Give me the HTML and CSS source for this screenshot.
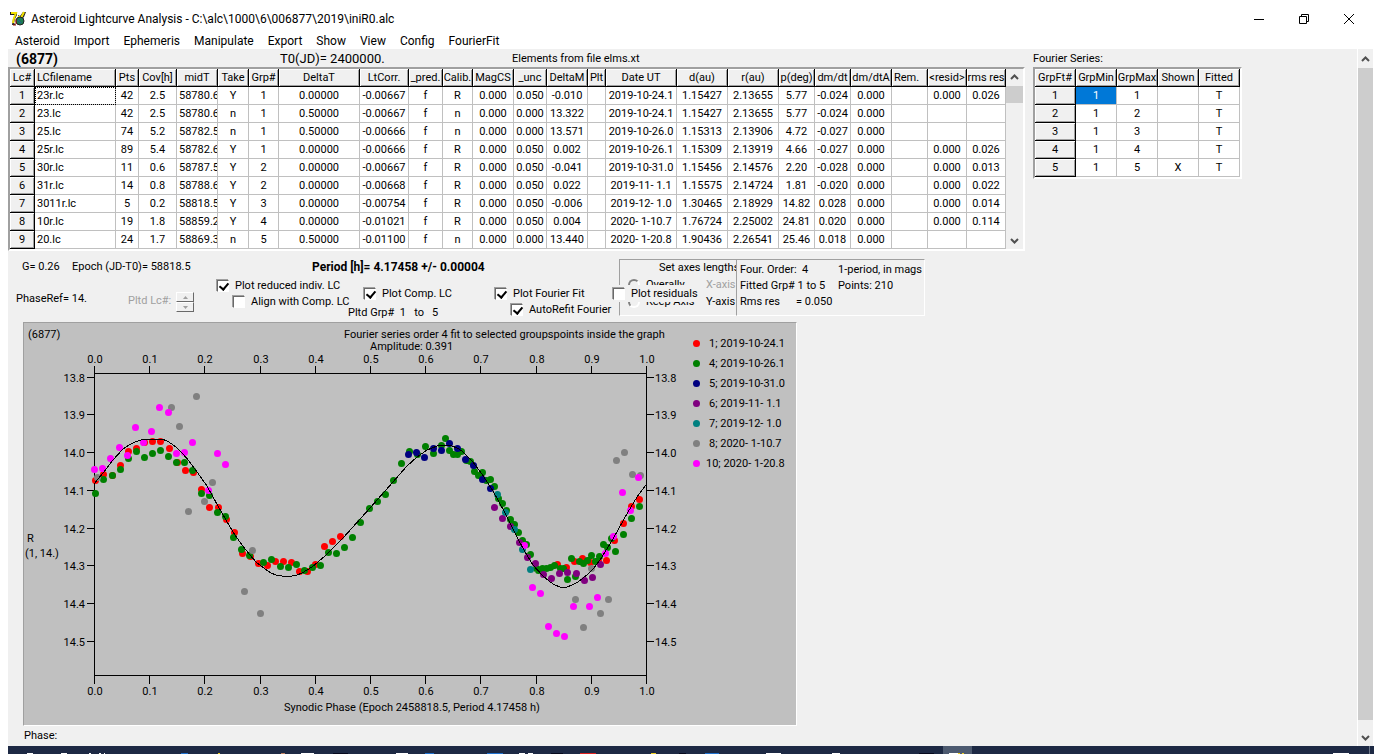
FILE: index.html
```html
<!DOCTYPE html>
<html lang="en">
<head>
<meta charset="utf-8">
<title>Asteroid Lightcurve Analysis</title>
<link rel="stylesheet" href="styles.css">
</head>
<body>
<header class="titlebar">
  <svg class="app-icon" viewBox="0 0 16 16" aria-hidden="true">
    <path d="M0 1h7v3L5 8l-1 4 2 2H2L3 8l2-4H0zM8 4l2 1 3-4h3l-2 5-3 3H8z" fill="#222"/>
    <path d="M1 2h5L4 7l-1 5M9 5v3M14 1l-3 6" fill="none" stroke="#f0e000" stroke-width="2"/>
    <circle cx="10" cy="10" r="4" fill="#1c7b54" stroke="#222"/>
    <path d="M3 14h3M6 8v5" stroke="#a01010" stroke-width="1"/>
    <path d="M8 9l3 3" stroke="#2a50a0" stroke-width="1"/>
  </svg>
  <h1 class="title">Asteroid Lightcurve Analysis - C:\alc\1000\6\006877\2019\iniR0.alc</h1>
  <div class="window-buttons">
    <button aria-label="Minimize"><svg viewBox="0 0 12 12"><path d="M1 6.500h10"/></svg></button>
    <button aria-label="Restore"><svg viewBox="0 0 12 12"><path d="M1.500 3.500h7v7h-7zM3.500 3.500v-2h7v7h-2"/></svg></button>
    <button aria-label="Close"><svg viewBox="0 0 12 12"><path d="M1 1l10 10M11 1L1 11"/></svg></button>
  </div>
</header>
<nav class="menubar">
  <button>Asteroid</button><button>Import</button><button>Ephemeris</button><button>Manipulate</button><button>Export</button><button>Show</button><button>View</button><button>Config</button><button>FourierFit</button>
</nav>
<main class="workspace">
  <div class="main-column">
    <div class="info-line">
      <strong class="object">(6877)</strong>
      <span class="epoch-zero">T0(JD)= 2400000.</span>
      <span>Elements from file elms.xt</span>
    </div>
    <div class="grid-frame">
      <table class="grid">
        <colgroup><col class="w25"><col class="w81"><col class="w23"><col class="w38"><col class="w41"><col class="w31"><col class="w30"><col class="w81"><col class="w49"><col class="w34"><col class="w30"><col class="w41"><col class="w33"><col class="w41"><col class="w18"><col class="w71"><col class="w51"><col class="w51"><col class="w36"><col class="w36"><col class="w41"><col class="w36"><col class="w39"><col class="w39"></colgroup>
        <thead><tr><th>Lc#</th><th class="left">LCfilename</th><th>Pts</th><th>Cov[h]</th><th>midT</th><th>Take</th><th>Grp#</th><th>DeltaT</th><th>LtCorr.</th><th>_pred.</th><th>Calib.</th><th>MagCS</th><th>_unc</th><th>DeltaM</th><th>Plt</th><th>Date UT</th><th>d(au)</th><th>r(au)</th><th>p(deg)</th><th>dm/dt</th><th>dm/dtA</th><th class="left">Rem.</th><th>&lt;resid&gt;</th><th>rms res</th></tr></thead>
        <tbody>
        <tr><th>1</th><td class="left focus">23r.lc</td><td>42</td><td>2.5</td><td class="left">58780.6</td><td>Y</td><td>1</td><td>0.00000</td><td>-0.00667</td><td>f</td><td>R</td><td>0.000</td><td>0.050</td><td>-0.010</td><td></td><td>2019-10-24.1</td><td>1.15427</td><td>2.13655</td><td>5.77</td><td>-0.024</td><td>0.000</td><td></td><td>0.000</td><td>0.026</td></tr>
        <tr><th>2</th><td class="left">23.lc</td><td>42</td><td>2.5</td><td class="left">58780.6</td><td>n</td><td>1</td><td>0.50000</td><td>-0.00667</td><td>f</td><td>n</td><td>0.000</td><td>0.000</td><td>13.322</td><td></td><td>2019-10-24.1</td><td>1.15427</td><td>2.13655</td><td>5.77</td><td>-0.024</td><td>0.000</td><td></td><td></td><td></td></tr>
        <tr><th>3</th><td class="left">25.lc</td><td>74</td><td>5.2</td><td class="left">58782.5</td><td>n</td><td>1</td><td>0.50000</td><td>-0.00666</td><td>f</td><td>n</td><td>0.000</td><td>0.000</td><td>13.571</td><td></td><td>2019-10-26.0</td><td>1.15313</td><td>2.13906</td><td>4.72</td><td>-0.027</td><td>0.000</td><td></td><td></td><td></td></tr>
        <tr><th>4</th><td class="left">25r.lc</td><td>89</td><td>5.4</td><td class="left">58782.6</td><td>Y</td><td>1</td><td>0.00000</td><td>-0.00666</td><td>f</td><td>R</td><td>0.000</td><td>0.050</td><td>0.002</td><td></td><td>2019-10-26.1</td><td>1.15309</td><td>2.13919</td><td>4.66</td><td>-0.027</td><td>0.000</td><td></td><td>0.000</td><td>0.026</td></tr>
        <tr><th>5</th><td class="left">30r.lc</td><td>11</td><td>0.6</td><td class="left">58787.5</td><td>Y</td><td>2</td><td>0.00000</td><td>-0.00667</td><td>f</td><td>R</td><td>0.000</td><td>0.050</td><td>-0.041</td><td></td><td>2019-10-31.0</td><td>1.15456</td><td>2.14576</td><td>2.20</td><td>-0.028</td><td>0.000</td><td></td><td>0.000</td><td>0.013</td></tr>
        <tr><th>6</th><td class="left">31r.lc</td><td>14</td><td>0.8</td><td class="left">58788.6</td><td>Y</td><td>2</td><td>0.00000</td><td>-0.00668</td><td>f</td><td>R</td><td>0.000</td><td>0.050</td><td>0.022</td><td></td><td>2019-11- 1.1</td><td>1.15575</td><td>2.14724</td><td>1.81</td><td>-0.020</td><td>0.000</td><td></td><td>0.000</td><td>0.022</td></tr>
        <tr><th>7</th><td class="left">3011r.lc</td><td>5</td><td>0.2</td><td class="left">58818.5</td><td>Y</td><td>3</td><td>0.00000</td><td>-0.00754</td><td>f</td><td>R</td><td>0.000</td><td>0.050</td><td>-0.006</td><td></td><td>2019-12- 1.0</td><td>1.30465</td><td>2.18929</td><td>14.82</td><td>0.028</td><td>0.000</td><td></td><td>0.000</td><td>0.014</td></tr>
        <tr><th>8</th><td class="left">10r.lc</td><td>19</td><td>1.8</td><td class="left">58859.2</td><td>Y</td><td>4</td><td>0.00000</td><td>-0.01021</td><td>f</td><td>R</td><td>0.000</td><td>0.050</td><td>0.004</td><td></td><td>2020- 1-10.7</td><td>1.76724</td><td>2.25002</td><td>24.81</td><td>0.020</td><td>0.000</td><td></td><td>0.000</td><td>0.114</td></tr>
        <tr><th>9</th><td class="left">20.lc</td><td>24</td><td>1.7</td><td class="left">58869.3</td><td>n</td><td>5</td><td>0.50000</td><td>-0.01100</td><td>f</td><td>n</td><td>0.000</td><td>0.000</td><td>13.440</td><td></td><td>2020- 1-20.8</td><td>1.90436</td><td>2.26541</td><td>25.46</td><td>0.018</td><td>0.000</td><td></td><td></td><td></td></tr>
        </tbody>
      </table>
      <div class="scrollbar">
        <button aria-label="Scroll up"><svg viewBox="0 0 9 9"><path d="M1 6l3.500-3.500L8 6"/></svg></button>
        <div class="thumb short"></div>
        <button class="last" aria-label="Scroll down"><svg viewBox="0 0 9 9"><path d="M1 3l3.500 3.500L8 3"/></svg></button>
      </div>
    </div>

    <section class="controls">
      <div class="settings">
        <div class="summary">
          <span class="g-value">G= 0.26</span>
          <span class="epoch">Epoch (JD-T0)= 58818.5</span>
          <strong class="period">Period [h]= 4.17458 +/- 0.00004</strong>
        </div>
        <div class="options">
          <span class="phase-ref">PhaseRef= 14.</span>
          <span class="plotted-lc">Pltd Lc#:</span>
          <span class="spinner">
            <button disabled aria-label="Next"><svg viewBox="0 0 5 3"><path d="M0 3L2.500 0L5 3z"/></svg></button>
            <button disabled aria-label="Previous"><svg viewBox="0 0 5 3"><path d="M0 0L2.500 3L5 0z"/></svg></button>
          </span>
          <div class="indiv">
            <label><input type="checkbox" checked>Plot reduced indiv. LC</label>
            <label class="indent"><input type="checkbox">Align with Comp. LC</label>
          </div>
          <div class="comp">
            <label class="indent"><input type="checkbox" checked>Plot Comp. LC</label>
            <span class="group-range">Pltd Grp#&nbsp; 1 &nbsp; to &nbsp; 5</span>
          </div>
          <div class="fourier">
            <label><input type="checkbox" checked>Plot Fourier Fit</label>
            <label class="indent"><input type="checkbox" checked>AutoRefit Fourier</label>
          </div>
        </div>
      </div>
      <div class="axes">
        <div class="axes-clip">
          <div class="axes-title">Set axes lengths</div>
          <div class="axes-row"><label><input type="radio" name="axes" disabled>Overally</label><span class="muted">X-axis</span></div>
          <div class="axes-row"><label><input type="radio" name="axes" disabled>Keep Axis</label><span>Y-axis</span></div>
        </div>
        <label class="residuals"><input type="checkbox">Plot residuals</label>
      </div>
      <div class="fit">
        <span>Four. Order:&nbsp; 4</span><span>1-period, in mags</span>
        <span>Fitted Grp# 1 to 5</span><span>Points: 210</span>
        <span>Rms res<span class="rms">= 0.050</span></span>
      </div>
    </section>

    <section class="plot">
      <svg viewBox="24 323 772 402" role="img" aria-label="Lightcurve">
        <g class="axis">
          <path d="M94 373.500H646M94 675.500H646M94.500 366V684M646.500 366V684"/>
          <path d="M149.500 366v8M204.500 366v8M260.500 366v8M315.500 366v8M370.500 366v8M425.500 366v8M480.500 366v8M536.500 366v8M591.500 366v8M149.500 676v8M204.500 676v8M260.500 676v8M315.500 676v8M370.500 676v8M425.500 676v8M480.500 676v8M536.500 676v8M591.500 676v8"/>
          <path d="M87 377.500h7M87 414.500h7M87 452.500h7M87 490.500h7M87 528.500h7M87 565.500h7M87 603.500h7M87 641.500h7M646 377.500h8M646 414.500h8M646 452.500h8M646 490.500h8M646 528.500h8M646 565.500h8M646 603.500h8M646 641.500h8"/>
        </g>
        <g class="text">
          <text x="28" y="338">(6877)</text>
          <text x="344" y="338">Fourier series order 4 fit to selected groupspoints inside the graph</text>
          <text x="370" y="350">Amplitude: 0.391</text>
          <text x="27" y="542">R</text>
          <text x="25" y="557">(1, 14.)</text>
          <text x="284" y="711">Synodic Phase (Epoch 2458818.5, Period 4.17458 h)</text>
        </g>
        <g class="text mid">
          <text x="95" y="363">0.0</text><text x="150" y="363">0.1</text><text x="205" y="363">0.2</text><text x="261" y="363">0.3</text><text x="316" y="363">0.4</text><text x="371" y="363">0.5</text><text x="426" y="363">0.6</text><text x="481" y="363">0.7</text><text x="537" y="363">0.8</text><text x="592" y="363">0.9</text><text x="647" y="363">1.0</text>
          <text x="95" y="695">0.0</text><text x="150" y="695">0.1</text><text x="205" y="695">0.2</text><text x="261" y="695">0.3</text><text x="316" y="695">0.4</text><text x="371" y="695">0.5</text><text x="426" y="695">0.6</text><text x="481" y="695">0.7</text><text x="537" y="695">0.8</text><text x="592" y="695">0.9</text><text x="647" y="695">1.0</text>
        </g>
        <g class="text end">
          <text x="85" y="382">13.8</text><text x="85" y="419">13.9</text><text x="85" y="457">14.0</text><text x="85" y="495">14.1</text><text x="85" y="533">14.2</text><text x="85" y="570">14.3</text><text x="85" y="608">14.4</text><text x="85" y="646">14.5</text>
        </g>
        <g class="text">
          <text x="655" y="382">13.8</text><text x="655" y="419">13.9</text><text x="655" y="457">14.0</text><text x="655" y="495">14.1</text><text x="655" y="533">14.2</text><text x="655" y="570">14.3</text><text x="655" y="608">14.4</text><text x="655" y="646">14.5</text>
          <text x="709" y="347">1; 2019-10-24.1</text><text x="709" y="367">4; 2019-10-26.1</text><text x="709" y="387">5; 2019-10-31.0</text><text x="709" y="407">6; 2019-11- 1.1</text><text x="709" y="427">7; 2019-12- 1.0</text><text x="709" y="447">8; 2020- 1-10.7</text><text x="706" y="467">10; 2020- 1-20.8</text>
        </g>
        <g class="dots" transform="translate(.5 .5)">
          <path class="red" d="M95 480h0M103 474h0M112 475h0M120 465h0M128 451h0M136 448h0M144 442h0M152 441h0M160 441h0M169 448h0M177 462h0M185 470h0M193 472h0M201 489h0M209 507h0M218 507h0M226 519h0M234 532h0M242 553h0M250 556h0M258 563h0M267 565h0M275 561h0M283 561h0M291 562h0M299 571h0M307 571h0M315 564h0M324 546h0M332 541h0M340 536h0M557 564h0M566 567h0M574 561h0M582 558h0M590 562h0M598 561h0M606 560h0M614 540h0M623 523h0M631 506h0M639 499h0M696 343h0"/>
          <path class="green" d="M95 493h0M103 479h0M112 475h0M120 469h0M128 458h0M136 451h0M144 457h0M152 453h0M160 450h0M168 456h0M176 462h0M184 462h0M192 470h0M201 493h0M209 495h0M217 512h0M225 516h0M233 537h0M241 549h0M249 555h0M263 562h0M271 559h0M280 566h0M288 567h0M296 564h0M304 570h0M312 567h0M320 565h0M328 552h0M336 553h0M344 547h0M352 537h0M360 522h0M369 508h0M377 501h0M385 494h0M393 480h0M401 463h0M409 451h0M417 454h0M425 446h0M433 453h0M441 445h0M445 438h0M449 450h0M453 454h0M457 454h0M461 451h0M466 460h0M470 461h0M474 471h0M478 475h0M482 472h0M486 480h0M490 479h0M494 486h0M498 498h0M502 503h0M506 510h0M510 519h0M514 524h0M518 532h0M522 540h0M526 544h0M530 554h0M536 568h0M538 570h0M542 568h0M546 568h0M550 567h0M554 565h0M560 568h0M563 568h0M567 579h0M571 558h0M575 576h0M579 561h0M583 563h0M587 560h0M591 555h0M595 561h0M599 556h0M603 544h0M607 547h0M611 538h0M615 551h0M623 534h0M631 518h0M639 506h0M696 363h0"/>
          <path class="navy" d="M408 454h0M416 452h0M424 457h0M433 448h0M441 450h0M449 443h0M457 448h0M465 459h0M473 465h0M482 479h0M490 488h0M696 383h0"/>
          <path class="purple" d="M494 507h0M502 518h0M510 526h0M519 542h0M527 557h0M535 563h0M543 574h0M551 578h0M559 573h0M567 572h0M576 573h0M584 580h0M592 577h0M600 564h0M696 403h0"/>
          <path class="teal" d="M497 494h0M505 512h0M514 529h0M522 549h0M530 569h0M696 423h0"/>
          <path class="gray" d="M97 477h0M171 407h0M179 426h0M196 396h0M188 511h0M204 501h0M212 482h0M252 550h0M244 591h0M260 613h0M575 599h0M583 627h0M591 568h0M600 613h0M608 599h0M616 460h0M624 452h0M632 474h0M640 475h0M696 443h0"/>
          <path class="magenta" d="M94 469h0M102 468h0M110 458h0M119 447h0M127 455h0M135 427h0M143 442h0M151 431h0M159 407h0M168 412h0M176 453h0M184 452h0M192 442h0M208 490h0M217 453h0M225 464h0M524 545h0M532 587h0M540 593h0M548 626h0M556 633h0M564 636h0M573 606h0M589 606h0M597 597h0M605 553h0M613 536h0M622 492h0M630 510h0M638 477h0M696 463h0"/>
        </g>
        <polyline class="curve" points="94,484 103,473 113,460 123,449 129,445 135,442 141,440 147,439 162,439 167,441 172,444 177,448 183,454 189,461 195,469 207,486 218,506 226,520 233,532 242,545 250,555 256,562 265,569 271,573 276,575 282,576 292,576 297,575 302,573 312,567 325,556 343,538 370,508 393,482 407,466 417,457 427,450 432,448 437,446 445,445 452,446 457,448 462,451 472,461 482,474 493,491 505,513 518,539 525,552 533,565 542,575 550,582 555,585 560,587 567,587 572,585 578,582 588,574 594,568 600,560 613,539 628,512 637,497 646,485"/>
      </svg>
    </section>
    <div class="readout"><span>Phase:</span><span>Mag:</span></div>
  </div>

  <aside class="series">
    <div class="series-title">Fourier Series:</div>
    <div class="grid-frame">
      <table class="grid">
        <colgroup><col class="w41"><col class="w41"><col class="w41"><col class="w41"><col class="w41"></colgroup>
        <thead><tr><th>GrpFt#</th><th>GrpMin</th><th>GrpMax</th><th>Shown</th><th>Fitted</th></tr></thead>
        <tbody>
        <tr><th>1</th><td class="selected">1</td><td>1</td><td></td><td>T</td></tr>
        <tr><th>2</th><td>1</td><td>2</td><td></td><td>T</td></tr>
        <tr><th>3</th><td>1</td><td>3</td><td></td><td>T</td></tr>
        <tr><th>4</th><td>1</td><td>4</td><td></td><td>T</td></tr>
        <tr><th>5</th><td>1</td><td>5</td><td>X</td><td>T</td></tr>
        </tbody>
      </table>
    </div>
  </aside>

  <div class="scrollbar page-scroll">
    <button aria-label="Scroll up"><svg viewBox="0 0 9 9"><path d="M1 6l3.500-3.500L8 6"/></svg></button>
    <div class="thumb long"></div>
    <button class="last" aria-label="Scroll down"><svg viewBox="0 0 9 9"><path d="M1 3l3.500 3.500L8 3"/></svg></button>
  </div>
</main>
<footer class="taskbar">
  <svg viewBox="8 746 1366 8" preserveAspectRatio="xMinYMin slice" aria-hidden="true">
    <path d="M943 746h29v8h-29z" fill="#4d5a70"/>
    <path d="M1369 746h1v8h-1z" fill="#6b7689"/>
    <path d="M27 753h6v1h-6zM61 753h6v1h-6zM89 753h2v1h-2zM99 753h2v1h-2zM104 753h1v1h-1zM301 753h13v1h-13zM396 753h12v1h-12zM519 753h6v1h-6zM528 753h5v1h-5zM766 753h15v1h-15zM832 753h8v1h-8zM949 753h9v1h-9zM1333 753h16v1h-16z" fill="#fff"/>
    <path d="M181 753h7v1h-7zM425 753h9v1h-9zM487 753h16v1h-16zM705 753h14v1h-14z" fill="#2072d0"/>
    <path d="M218 753h2v1h-2zM651 753h5v1h-5zM958 753h2v1h-2zM962 753h2v1h-2z" fill="#f0d020"/>
    <path d="M281 753h4v1h-4z" fill="#c08060"/>
    <path d="M333 753h15v1h-15zM551 753h12v1h-12zM679 753h7v1h-7zM919 753h15v1h-15z" fill="#05081c"/>
    <path d="M580 753h16v1h-16z" fill="#e02020"/>
  </svg>
</footer>
</body>
</html>
```
FILE: styles.css
```css
* { box-sizing: border-box; }
body {
  margin: 0;
  height: 100vh;
  display: flex;
  flex-direction: column;
  overflow: hidden;
  background: #fff;
  color: #000;
  font: 11px/16px Roboto, "Liberation Sans", sans-serif;
}
button { margin: 0; padding: 0; border: 0; background: none; font: inherit; color: inherit; }
svg { display: block; }

.titlebar { display: flex; align-items: center; padding-left: 10px; height: 34px; padding-top: 4px; }
.app-icon { width: 16px; height: 16px; }
.title { margin: 0 0 0 5px; font: 12px/16px Roboto, "Noto Sans", sans-serif; white-space: pre; }
.window-buttons { display: flex; margin-left: auto; margin-right: 11px; }
.window-buttons button { width: 45px; height: 28px; display: grid; place-items: center; }
.window-buttons svg { width: 12px; height: 12px; fill: none; stroke: #000; }

.menubar { display: flex; gap: 14px; padding-left: 15px; height: 15px; font: 12px/15px Roboto, "Noto Sans", sans-serif; }

.workspace { flex: 1; min-height: 0; display: flex; margin: 0 8px; background: #f0f0f0; overflow: hidden; }
.main-column { padding-top: 2px; flex: none; }
.info-line { display: flex; align-items: center; height: 16px; padding-left: 8px; }
.object { width: 264px; font-size: 14px; }
.epoch-zero { width: 232px; font-size: 13px; }

.grid-frame { display: flex; width: max-content; border: 2px solid; border-color: #a0a0a0 #fff #fff #a0a0a0; }
.grid { table-layout: fixed; width: 0; border-spacing: 0; background: #fff; }
.grid th, .grid td { height: 18px; padding: 0; border: solid #c0c0c0; border-width: 0 1px 1px 0; text-align: center; font-weight: normal; line-height: 17px; white-space: pre; overflow: hidden; }
.grid th { background: #f0f0f0; border-color: #000; box-shadow: inset 1px 1px #fff, inset -1px -1px #a0a0a0; }
.grid .left { text-align: left; padding-left: 2px; }
.grid .focus { outline: 1px dotted #000; outline-offset: -1px; }
.grid .selected { background: #0078d7; color: #fff; }
.w18 { width: 18px; } .w23 { width: 23px; } .w25 { width: 25px; } .w30 { width: 30px; }
.w31 { width: 31px; } .w33 { width: 33px; } .w34 { width: 34px; } .w36 { width: 36px; }
.w38 { width: 38px; } .w39 { width: 39px; } .w41 { width: 41px; } .w49 { width: 49px; }
.w51 { width: 51px; } .w71 { width: 71px; } .w81 { width: 81px; }

.scrollbar { display: flex; flex-direction: column; width: 17px; background: #f0f0f0; }
.scrollbar button { width: 100%; height: 17px; display: grid; place-items: center; }
.scrollbar .last { margin-top: auto; }
.scrollbar svg { width: 9px; height: 9px; fill: none; stroke: #505050; stroke-width: 2; }
.thumb { background: #cdcdcd; }
.thumb.short { height: 17px; }
.thumb.long { flex: 1; margin-bottom: 9px; }
.page-scroll { margin-left: auto; padding-top: 2px; border-left: 1px solid #fff; border-right: 1px solid #fff; }

.controls { display: flex; padding-top: 8px; height: 71px; }
.settings { width: 611px; }
.summary { display: flex; padding-left: 14px; white-space: nowrap; }
.g-value { width: 50px; }
.epoch { width: 240px; }
.period { font-size: 12px; }
.options { display: flex; padding-left: 8px; white-space: nowrap; }
.phase-ref { width: 112px; padding-top: 16px; }
.plotted-lc { width: 48px; padding-top: 18px; color: #a0a0a0; }
.spinner { width: 18px; padding-top: 17px; }
.spinner button { width: 18px; height: 10px; display: grid; place-items: center; border: 1px solid; border-color: #fff #696969 #696969 #fff; }
.spinner svg { width: 5px; height: 3px; fill: #a0a0a0; }
.indiv { width: 154px; padding: 3px 0 0 23px; }
.comp { width: 147px; padding-top: 11px; }
.fourier { padding-top: 11px; }
.controls label { display: flex; align-items: center; height: 16px; gap: 6px; white-space: nowrap; }
.controls .indent { margin-left: 16px; }
.group-range { display: block; padding-top: 3px; white-space: nowrap; }
input[type="checkbox"] { appearance: none; flex: none; width: 12px; height: 12px; margin: 0; background: #fff; border: 1px solid; border-color: #696969 #fff #fff #696969; box-shadow: -1px -1px #a0a0a0; position: relative; }
input[type="checkbox"]:checked::after { content: ""; position: absolute; left: 3px; top: 0; width: 4px; height: 7px; border: solid #000; border-width: 0 2px 2px 0; transform: rotate(40deg); }
input[type="radio"] { appearance: none; flex: none; width: 12px; height: 12px; margin: 0; border-radius: 50%; border: 2px solid; border-color: #808080 #fff #fff #808080; background: #f0f0f0; }

.axes { position: relative; width: 117px; height: 57px; border: solid; border-width: 1px 0 1px 1px; border-color: #a0a0a0 #fff #fff #a0a0a0; }
.axes-clip { overflow: hidden; height: 55px; }
.axes-title { padding-left: 39px; white-space: nowrap; }
.axes-row { display: flex; align-items: center; padding-left: 8px; height: 17px; white-space: nowrap; }
.axes-row label { width: 78px; }
.muted { color: #a0a0a0; }
.controls .residuals { position: absolute; left: -7px; top: 25px; height: 17px; width: 84px; background: #f0f0f0; }
.fit { display: grid; grid-template-columns: 98px auto; align-content: start; width: 189px; height: 57px; padding: 2px 0 0 3px; border: 1px solid; border-color: #a0a0a0 #fff #fff #a0a0a0; white-space: nowrap; }
.rms { margin-left: 16px; }

.plot { width: 774px; margin-left: 15px; border: 1px solid; border-color: #a0a0a0 #fff #fff #a0a0a0; background: #c0c0c0; }
.axis path { fill: none; stroke: #000; stroke-width: 1; shape-rendering: crispEdges; }
.text { font-size: 11px; }
.mid { text-anchor: middle; }
.end { text-anchor: end; }
.dots path { fill: none; stroke-width: 7; stroke-linecap: round; }
.dots .red { stroke: #f00; }
.dots .green { stroke: #008000; }
.dots .navy { stroke: #000080; }
.dots .purple { stroke: #800080; }
.dots .teal { stroke: #008080; }
.dots .gray { stroke: #808080; }
.dots .magenta { stroke: #f0f; }
.curve { fill: none; stroke: #000; stroke-width: 1; shape-rendering: crispEdges; }
.readout { display: flex; flex-direction: column; padding: 2px 0 0 16px; }
.readout span { height: 15px; }

.series { margin-left: 8px; padding-top: 2px; }
.series-title { height: 16px; }

.taskbar { height: 8px; margin: 0 8px; background: #1d2944; overflow: hidden; }
.taskbar svg { width: 100%; height: 8px; }
```
